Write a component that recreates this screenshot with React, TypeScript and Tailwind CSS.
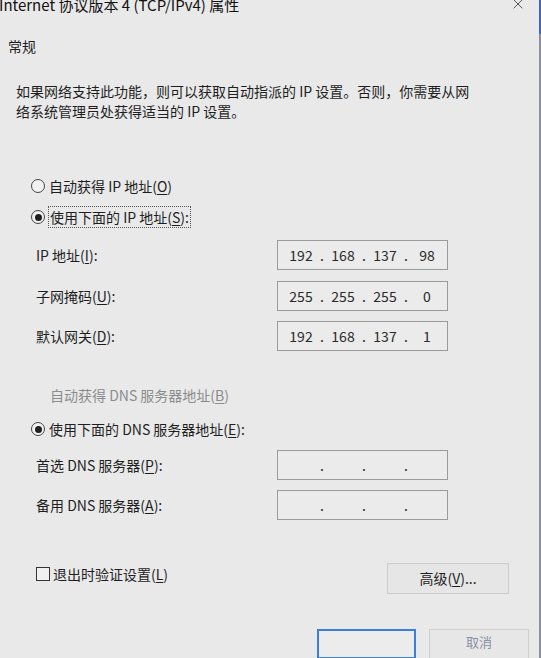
import { X } from "lucide-react";

const font = {
  fontFamily: '"Noto Sans CJK SC", "Noto Sans", "Liberation Sans", sans-serif',
};

function Key({ k }: { k: string }) {
  return <span className="underline underline-offset-2">{k}</span>;
}

function Radio({ checked }: { checked?: boolean }) {
  return (
    <span className="w-[14px] h-[14px] rounded-full border border-[#444] bg-[#f2f2f2] flex items-center justify-center shrink-0">
      {checked && <span className="w-[7px] h-[7px] rounded-full bg-[#1f1f1f]" />}
    </span>
  );
}

function IpBox({ parts }: { parts: string[] }) {
  return (
    <div className="w-[171px] h-[30px] border border-[#9a9a9a] bg-[#ebebeb] flex items-center pl-[8px] text-[14px] text-[#2a2a2a]">
      {parts.map((p, i) => (
        <div key={i} className="flex items-center">
          <span className="w-[30px] text-center">{p}</span>
          {i < 3 && <span className="w-[12px] text-center">.</span>}
        </div>
      ))}
    </div>
  );
}

function FieldRow({
  label,
  parts,
  mt,
}: {
  label: React.ReactNode;
  parts: string[];
  mt: string;
}) {
  return (
    <div className={`flex items-center h-[30px] ${mt}`}>
      <div className="pl-[36px] w-[277px]">{label}</div>
      <IpBox parts={parts} />
    </div>
  );
}

export default function App() {
  return (
    <div
      className="w-[541px] h-[658px] bg-[#e9e9e9] overflow-hidden flex text-[14px] text-[#1e1e1e]"
      style={font}
    >
      <div className="flex-1 flex flex-col">
        {/* title bar */}
        <div className="h-[20px] flex items-start justify-between">
          <div className="text-[15px] leading-[20px] -mt-[5px] -ml-[1px] text-[#111]">
            Internet 协议版本 4 (TCP/IPv4) 属性
          </div>
          <X className="w-[16px] h-[16px] -mt-[4px] mr-[13px] text-[#333]" strokeWidth={1.2} />
        </div>

        <div className="pl-[8px] mt-[21px] leading-[20px]">常规</div>

        <p className="pl-[16px] mt-[25px] leading-[20px]">
          如果网络支持此功能，则可以获取自动指派的 IP 设置。否则，你需要从网
          <br />
          络系统管理员处获得适当的 IP 设置。
        </p>

        {/* IP address choice */}
        <div className="flex items-center gap-[4px] pl-[31px] mt-[55px] h-[20px]">
          <Radio />
          <span>
            自动获得 IP 地址(<Key k="O" />)
          </span>
        </div>
        <div className="flex items-center gap-[3px] pl-[31px] mt-[10px] h-[22px]">
          <Radio checked />
          <span className="border border-dotted border-[#555] px-[1px] leading-[20px]">
            使用下面的 IP 地址(<Key k="S" />):
          </span>
        </div>

        <FieldRow
          mt="mt-[12px]"
          label={
            <>
              IP 地址(<Key k="I" />):
            </>
          }
          parts={["192", "168", "137", "98"]}
        />
        <FieldRow
          mt="mt-[11px]"
          label={
            <>
              子网掩码(<Key k="U" />):
            </>
          }
          parts={["255", "255", "255", "0"]}
        />
        <FieldRow
          mt="mt-[10px]"
          label={
            <>
              默认网关(<Key k="D" />):
            </>
          }
          parts={["192", "168", "137", "1"]}
        />

        {/* DNS choice */}
        <div className="pl-[50px] mt-[34px] h-[20px] leading-[20px] text-[#8c8c8c]">
          自动获得 DNS 服务器地址(<Key k="B" />)
        </div>
        <div className="flex items-center gap-[4px] pl-[31px] mt-[14px] h-[20px]">
          <Radio checked />
          <span>
            使用下面的 DNS 服务器地址(<Key k="E" />):
          </span>
        </div>

        <FieldRow
          mt="mt-[11px]"
          label={
            <>
              首选 DNS 服务器(<Key k="P" />):
            </>
          }
          parts={["", "", "", ""]}
        />
        <FieldRow
          mt="mt-[10px]"
          label={
            <>
              备用 DNS 服务器(<Key k="A" />):
            </>
          }
          parts={["", "", "", ""]}
        />

        {/* options */}
        <div className="flex items-start justify-between mt-[43px] pl-[36px] pr-[30px]">
          <div className="flex items-center gap-[3px] h-[20px] mt-[1px]">
            <span className="w-[14px] h-[14px] border border-[#333] bg-[#f0f0f0]" />
            <span>
              退出时验证设置(<Key k="L" />)
            </span>
          </div>
          <button className="w-[122px] h-[31px] border border-[#cdcdcd] bg-[#e6e6e6] text-[14px]">
            高级(<Key k="V" />)...
          </button>
        </div>

        {/* dialog buttons */}
        <div className="flex justify-end gap-[13px] mt-[35px] pr-[10px]">
          <button className="w-[99px] h-[30px] border-2 border-[#3d7fd8] bg-[#ececec]" />
          <button className="w-[100px] h-[30px] border border-[#cfcfcf] bg-[#e7e7e7] text-[13px] text-[#8a8fa6] leading-none pb-[6px]">
            取消
          </button>
        </div>
      </div>

      {/* window edge */}
      <div className="w-[2px] flex flex-col bg-[#8e8f9e]">
        <div className="h-[34px] bg-[#3f68b6]" />
      </div>
    </div>
  );
}
